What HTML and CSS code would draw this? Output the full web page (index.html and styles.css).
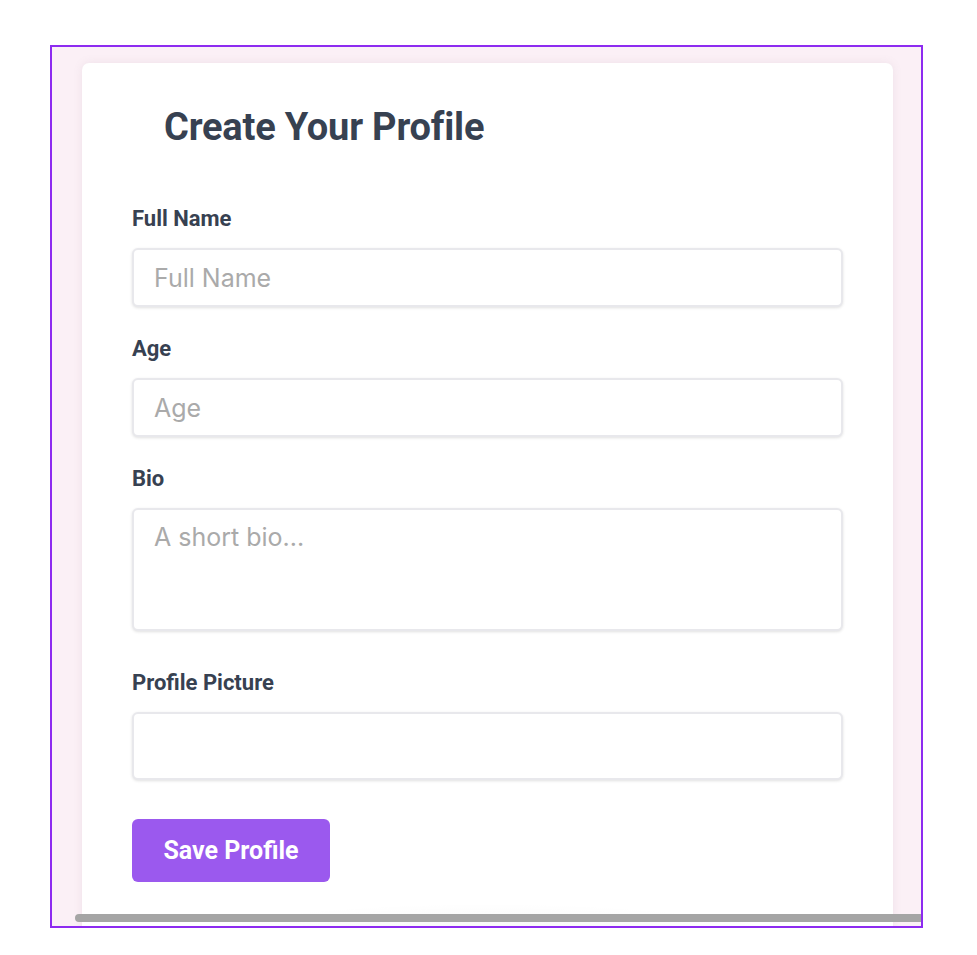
FILE: index.html
```html
<!DOCTYPE html>
<html lang="en">
<head>
<meta charset="utf-8">
<title>Create Your Profile</title>
<link rel="stylesheet" href="styles.css">
</head>
<body>
<div class="frame">
  <div class="card">
    <h1 class="title">Create Your Profile</h1>
    <form class="form">
      <label class="label" for="name">Full Name</label>
      <input class="field" id="name" type="text" placeholder="Full Name">
      <label class="label" for="age">Age</label>
      <input class="field" id="age" type="text" placeholder="Age">
      <label class="label" for="bio">Bio</label>
      <textarea class="field area" id="bio" placeholder="A short bio..."></textarea>
      <label class="label" for="pic">Profile Picture</label>
      <div class="field file" id="pic"></div>
      <button class="btn" type="button">Save Profile</button>
    </form>
  </div>
  <div class="scrollbar"></div>
</div>
</body>
</html>
```
FILE: styles.css
```css
* { box-sizing: border-box; }
html, body { margin: 0; padding: 0; background: #ffffff; }
body { font-family: Roboto, "Liberation Sans", sans-serif; }

.frame {
  position: relative;
  margin: 45px 0 0 50px;
  width: 873px;
  height: 883px;
  border: 2px solid #8d2bf0;
  background: #fbf0f6;
  overflow: hidden;
  padding: 16px 28px 0 30px;
}

.card {
  background: #ffffff radial-gradient(ellipse 45% 60px at 50% 100%, rgba(0,0,0,0.07), rgba(0,0,0,0) 100%);
  border-radius: 7px 7px 0 0;
  box-shadow: 0 0 10px rgba(150, 120, 140, 0.12);
  height: 900px;
  padding: 45px 50px 0 50px;
}

.title {
  margin: 0 0 61px 32px;
  font-family: Roboto, "Liberation Sans", sans-serif;
  font-weight: 700;
  font-size: 38px;
  line-height: 38px;
  letter-spacing: -0.2px;
  color: #374151;
}

.form { display: flex; flex-direction: column; align-items: stretch; }

.label {
  font-family: Roboto, "Liberation Sans", sans-serif;
  font-weight: 700;
  font-size: 22px;
  line-height: 24px;
  color: #374151;
  margin-bottom: 17px;
}

.field {
  display: block;
  width: 100%;
  height: 59px;
  margin: 0 0 30px 0;
  padding: 0 20px;
  border: 2px solid #e8e8ec;
  border-radius: 6px;
  background: #ffffff;
  box-shadow: 0 1px 3px rgba(0, 0, 0, 0.12);
  font-family: Inter, "Noto Sans", sans-serif;
  font-size: 25px;
  color: #333;
  outline: none;
}
.field::placeholder { color: #aaaaaa; }

.area {
  height: 123px;
  padding-top: 12px;
  resize: none;
  margin-bottom: 40px;
}

.file { height: 68px; margin-bottom: 39px; }

.btn {
  align-self: flex-start;
  width: 198px;
  height: 63px;
  border: none;
  border-radius: 6px;
  background: #9b59ee;
  color: #ffffff;
  font-family: Roboto, "Liberation Sans", sans-serif;
  font-weight: 700;
  font-size: 25px;
}

.scrollbar {
  position: absolute;
  left: 23px;
  right: 0;
  bottom: 4px;
  height: 8px;
  background: #a5a5a5;
  border-radius: 4px 0 0 4px;
}
```
